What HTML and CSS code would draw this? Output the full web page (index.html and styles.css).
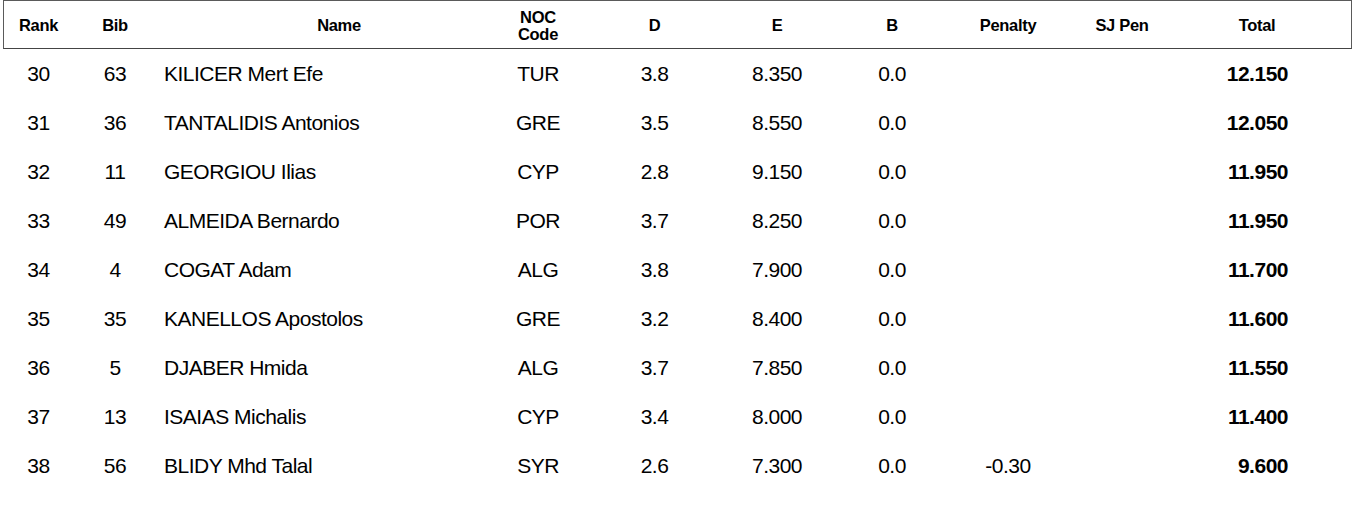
FILE: index.html
```html
<!DOCTYPE html>
<html lang="en">
<head>
<meta charset="utf-8">
<title>Results</title>
<link rel="stylesheet" href="styles.css">
</head>
<body>
<div class="results">
  <div class="line head">
    <div class="c rank">Rank</div>
    <div class="c bib">Bib</div>
    <div class="c name">Name</div>
    <div class="c noc">NOC<br>Code</div>
    <div class="c d">D</div>
    <div class="c e">E</div>
    <div class="c b">B</div>
    <div class="c pen">Penalty</div>
    <div class="c sj">SJ Pen</div>
    <div class="c total">Total</div>
  </div>
  <div class="line row">
    <div class="c rank">30</div><div class="c bib">63</div><div class="c name">KILICER Mert Efe</div><div class="c noc">TUR</div><div class="c d">3.8</div><div class="c e">8.350</div><div class="c b">0.0</div><div class="c pen"></div><div class="c sj"></div><div class="c total">12.150</div>
  </div>
  <div class="line row">
    <div class="c rank">31</div><div class="c bib">36</div><div class="c name">TANTALIDIS Antonios</div><div class="c noc">GRE</div><div class="c d">3.5</div><div class="c e">8.550</div><div class="c b">0.0</div><div class="c pen"></div><div class="c sj"></div><div class="c total">12.050</div>
  </div>
  <div class="line row">
    <div class="c rank">32</div><div class="c bib">11</div><div class="c name">GEORGIOU Ilias</div><div class="c noc">CYP</div><div class="c d">2.8</div><div class="c e">9.150</div><div class="c b">0.0</div><div class="c pen"></div><div class="c sj"></div><div class="c total">11.950</div>
  </div>
  <div class="line row">
    <div class="c rank">33</div><div class="c bib">49</div><div class="c name">ALMEIDA Bernardo</div><div class="c noc">POR</div><div class="c d">3.7</div><div class="c e">8.250</div><div class="c b">0.0</div><div class="c pen"></div><div class="c sj"></div><div class="c total">11.950</div>
  </div>
  <div class="line row">
    <div class="c rank">34</div><div class="c bib">4</div><div class="c name">COGAT Adam</div><div class="c noc">ALG</div><div class="c d">3.8</div><div class="c e">7.900</div><div class="c b">0.0</div><div class="c pen"></div><div class="c sj"></div><div class="c total">11.700</div>
  </div>
  <div class="line row">
    <div class="c rank">35</div><div class="c bib">35</div><div class="c name">KANELLOS Apostolos</div><div class="c noc">GRE</div><div class="c d">3.2</div><div class="c e">8.400</div><div class="c b">0.0</div><div class="c pen"></div><div class="c sj"></div><div class="c total">11.600</div>
  </div>
  <div class="line row">
    <div class="c rank">36</div><div class="c bib">5</div><div class="c name">DJABER Hmida</div><div class="c noc">ALG</div><div class="c d">3.7</div><div class="c e">7.850</div><div class="c b">0.0</div><div class="c pen"></div><div class="c sj"></div><div class="c total">11.550</div>
  </div>
  <div class="line row">
    <div class="c rank">37</div><div class="c bib">13</div><div class="c name">ISAIAS Michalis</div><div class="c noc">CYP</div><div class="c d">3.4</div><div class="c e">8.000</div><div class="c b">0.0</div><div class="c pen"></div><div class="c sj"></div><div class="c total">11.400</div>
  </div>
  <div class="line row">
    <div class="c rank">38</div><div class="c bib">56</div><div class="c name">BLIDY Mhd Talal</div><div class="c noc">SYR</div><div class="c d">2.6</div><div class="c e">7.300</div><div class="c b">0.0</div><div class="c pen">-0.30</div><div class="c sj"></div><div class="c total">9.600</div>
  </div>
</div>
</body>
</html>
```

FILE: styles.css
```css
html, body {
  margin: 0;
  padding: 0;
  background: #ffffff;
}

body {
  font-family: "Liberation Sans", Arial, sans-serif;
  color: #000000;
}

.results {
  margin-left: 3px;
  width: 1349px;
}

.line {
  display: grid;
  grid-template-columns: 69px 84px 323px 116px 117px 128px 102px 130px 98px 1fr;
  align-items: center;
}

.c {
  text-align: center;
  white-space: nowrap;
}

.head {
  box-sizing: border-box;
  height: 49px;
  padding-top: 2px;
  border: 1px solid #5a5a5a;
  border-bottom-color: #444444;
  font-weight: bold;
  font-size: 16.5px;
  letter-spacing: -0.3px;
  line-height: 17px;
}

.head .name {
  padding-left: 41px;
}

.head .total {
  padding-right: 8px;
}

.row {
  height: 49px;
  padding-top: 1px;
  box-sizing: border-box;
  font-size: 21px;
  letter-spacing: -0.5px;
  margin-left: 1px;
  margin-right: 1px;
}

.row .name {
  text-align: left;
  padding-left: 7px;
}

.row .total {
  text-align: right;
  padding-right: 63px;
  font-weight: bold;
}
```
